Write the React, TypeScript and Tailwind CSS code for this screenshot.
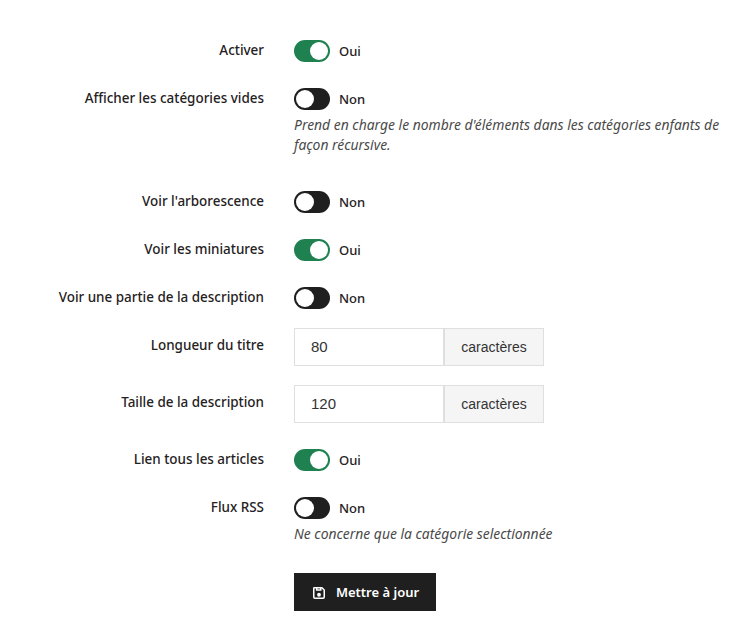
import React from "react";

const font = "font-['Noto_Sans',sans-serif]";

const Toggle = ({ on }: { on: boolean }) => (
  <div className="flex items-center h-[22px] mt-[7px]">
    <span className={`flex items-center w-9 h-[22px] rounded-full px-[2px] ${on ? "bg-[#1f8150] justify-end" : "bg-[#1f1f1f] justify-start"}`}>
      <span className="block w-[18px] h-[18px] rounded-full bg-white" />
    </span>
    <span className="ml-[9px] text-[13px] font-medium text-[#25211d] leading-[22px]">{on ? "Oui" : "Non"}</span>
  </div>
);

const Row = ({ label, children, className = "mb-[19px]" }: { label: string; children: React.ReactNode; className?: string }) => (
  <div className={`flex ${className}`}>
    <label className="w-[264px] shrink-0 text-right text-[13.45px] font-medium text-[#25211d] leading-[20px] pt-[7px]">{label}</label>
    <div className="ml-[30px] flex-1 min-w-0">{children}</div>
  </div>
);

const Help = ({ children }: { children: React.ReactNode }) => (
  <p className="mt-[5px] text-[13.9px] italic leading-[20px] text-[#4a4a4a]">{children}</p>
);

const CharInput = ({ value }: { value: string }) => (
  <div className="flex h-[38px] font-['Liberation_Sans',sans-serif]">
    <div className="w-[150px] border border-[#dfdfdf] bg-white pl-4 flex items-center text-[15px] text-[#333]">{value}</div>
    <div className="w-[100px] border border-[#dfdfdf] bg-[#f5f5f5] flex items-center justify-center text-[14px] text-[#333]">caractères</div>
  </div>
);

export default function App() {
  return (
    <div className={`${font} bg-white min-h-screen w-[733px] pt-[33px] pr-[12px]`}>
      <Row label="Activer"><Toggle on /></Row>
      <Row label="Afficher les catégories vides" className="mb-[29px]">
        <Toggle on={false} />
        <Help>Prend en charge le nombre d'éléments dans les catégories enfants de façon récursive.</Help>
      </Row>
      <Row label="Voir l'arborescence"><Toggle on={false} /></Row>
      <Row label="Voir les miniatures"><Toggle on /></Row>
      <Row label="Voir une partie de la description"><Toggle on={false} /></Row>
      <Row label="Longueur du titre"><CharInput value="80" /></Row>
      <Row label="Taille de la description"><CharInput value="120" /></Row>
      <Row label="Lien tous les articles"><Toggle on /></Row>
      <Row label="Flux RSS" className="mb-[29px]">
        <Toggle on={false} />
        <Help>Ne concerne que la catégorie selectionnée</Help>
      </Row>
      <div className="ml-[294px]">
        <button className="flex items-center justify-center w-[142px] h-[38px] pt-px pl-px bg-[#1f1f1f] text-white text-[13px] font-semibold">
          <svg className="w-[14px] h-[14px] mr-[10px]" viewBox="0 0 24 24" fill="none" stroke="currentColor" strokeWidth="2.6">
            <path d="M4 3h13l4 4v12a2 2 0 0 1-2 2H5a2 2 0 0 1-2-2V4a1 1 0 0 1 1-1z" />
            <path d="M8 3v4h7V3" />
            <circle cx="12" cy="15" r="2" fill="currentColor" />
          </svg>
          Mettre à jour
        </button>
      </div>
    </div>
  );
}
